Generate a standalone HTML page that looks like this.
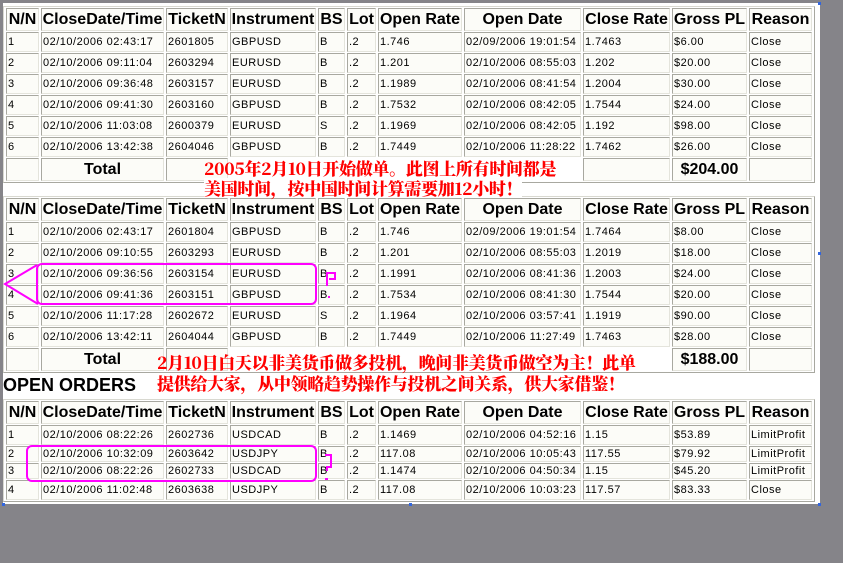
<!DOCTYPE html>
<html><head><meta charset="utf-8"><style>
html,body{margin:0;padding:0;}
body{width:843px;height:563px;background:#858489;position:relative;overflow:hidden;font-family:"Liberation Sans",Arial,sans-serif;}
#page{position:absolute;left:3px;top:3px;width:817px;height:501px;background:#fff;overflow:hidden;}
table{position:absolute;left:0;border-collapse:separate;border-spacing:2px 1px;table-layout:fixed;width:811px;border:1px solid;border-color:#d8d8d0 #a8a8a0 #a8a8a0 #d8d8d0;background:#fff;}
td{border:1px solid;border-color:#a8a8a0 #e4e4dc #e4e4dc #a8a8a0;background:#fcfcf8;font-size:11px;letter-spacing:0.5px;padding:0 0 0 1px;height:18px;white-space:nowrap;overflow:hidden;color:#000;}
tr.h td{font-size:16px;letter-spacing:0;font-weight:bold;height:21px;text-align:center;padding:0;}
tr.t td{height:21px;}
tr.t td.n{border:none;background:#fff;}
tr.t td.tot{font-size:16px;letter-spacing:0;font-weight:bold;text-align:center;padding:0;}
tr.s td{height:14px;line-height:12px;}
.red{position:absolute;color:#ff0000;font-family:"Noto Serif CJK SC","WenQuanYi Zen Hei",serif;font-weight:900;font-size:17px;line-height:20px;white-space:nowrap;letter-spacing:-0.3px;}
</style></head><body>
<div id="page">
<table style="top:3px">
<colgroup><col style="width:33px"><col style="width:123px"><col style="width:62px"><col style="width:86px"><col style="width:27px"><col style="width:29px"><col style="width:84px"><col style="width:117px"><col style="width:87px"><col style="width:75px"><col style="width:63px"></colgroup>
<tr class="h"><td>N/N</td><td>CloseDate/Time</td><td>TicketN</td><td>Instrument</td><td>BS</td><td>Lot</td><td>Open Rate</td><td>Open Date</td><td>Close Rate</td><td>Gross PL</td><td>Reason</td></tr>
<tr><td>1</td><td>02/10/2006 02:43:17</td><td>2601805</td><td>GBPUSD</td><td>B</td><td>.2</td><td>1.746</td><td>02/09/2006 19:01:54</td><td>1.7463</td><td>$6.00</td><td>Close</td></tr>
<tr><td>2</td><td>02/10/2006 09:11:04</td><td>2603294</td><td>EURUSD</td><td>B</td><td>.2</td><td>1.201</td><td>02/10/2006 08:55:03</td><td>1.202</td><td>$20.00</td><td>Close</td></tr>
<tr><td>3</td><td>02/10/2006 09:36:48</td><td>2603157</td><td>EURUSD</td><td>B</td><td>.2</td><td>1.1989</td><td>02/10/2006 08:41:54</td><td>1.2004</td><td>$30.00</td><td>Close</td></tr>
<tr><td>4</td><td>02/10/2006 09:41:30</td><td>2603160</td><td>GBPUSD</td><td>B</td><td>.2</td><td>1.7532</td><td>02/10/2006 08:42:05</td><td>1.7544</td><td>$24.00</td><td>Close</td></tr>
<tr><td>5</td><td>02/10/2006 11:03:08</td><td>2600379</td><td>EURUSD</td><td>S</td><td>.2</td><td>1.1969</td><td>02/10/2006 08:42:05</td><td>1.192</td><td>$98.00</td><td>Close</td></tr>
<tr><td>6</td><td>02/10/2006 13:42:38</td><td>2604046</td><td>GBPUSD</td><td>B</td><td>.2</td><td>1.7449</td><td>02/10/2006 11:28:22</td><td>1.7462</td><td>$26.00</td><td>Close</td></tr>
<tr class="t"><td></td><td class="tot">Total</td><td></td><td class="n" colspan="5"></td><td></td><td class="tot">$204.00</td><td></td></tr>
</table>

<table style="top:193px">
<colgroup><col style="width:33px"><col style="width:123px"><col style="width:62px"><col style="width:86px"><col style="width:27px"><col style="width:29px"><col style="width:84px"><col style="width:117px"><col style="width:87px"><col style="width:75px"><col style="width:63px"></colgroup>
<tr class="h"><td>N/N</td><td>CloseDate/Time</td><td>TicketN</td><td>Instrument</td><td>BS</td><td>Lot</td><td>Open Rate</td><td>Open Date</td><td>Close Rate</td><td>Gross PL</td><td>Reason</td></tr>
<tr><td>1</td><td>02/10/2006 02:43:17</td><td>2601804</td><td>GBPUSD</td><td>B</td><td>.2</td><td>1.746</td><td>02/09/2006 19:01:54</td><td>1.7464</td><td>$8.00</td><td>Close</td></tr>
<tr><td>2</td><td>02/10/2006 09:10:55</td><td>2603293</td><td>EURUSD</td><td>B</td><td>.2</td><td>1.201</td><td>02/10/2006 08:55:03</td><td>1.2019</td><td>$18.00</td><td>Close</td></tr>
<tr><td>3</td><td>02/10/2006 09:36:56</td><td>2603154</td><td>EURUSD</td><td>B</td><td>.2</td><td>1.1991</td><td>02/10/2006 08:41:36</td><td>1.2003</td><td>$24.00</td><td>Close</td></tr>
<tr><td>4</td><td>02/10/2006 09:41:36</td><td>2603151</td><td>GBPUSD</td><td>B</td><td>.2</td><td>1.7534</td><td>02/10/2006 08:41:30</td><td>1.7544</td><td>$20.00</td><td>Close</td></tr>
<tr><td>5</td><td>02/10/2006 11:17:28</td><td>2602672</td><td>EURUSD</td><td>S</td><td>.2</td><td>1.1964</td><td>02/10/2006 03:57:41</td><td>1.1919</td><td>$90.00</td><td>Close</td></tr>
<tr><td>6</td><td>02/10/2006 13:42:11</td><td>2604044</td><td>GBPUSD</td><td>B</td><td>.2</td><td>1.7449</td><td>02/10/2006 11:27:49</td><td>1.7463</td><td>$28.00</td><td>Close</td></tr>
<tr class="t"><td></td><td class="tot">Total</td><td></td><td class="n" colspan="5"></td><td class="n"></td><td class="tot">$188.00</td><td></td></tr>
</table>

<div style="position:absolute;left:0;top:372px;font-size:18px;font-weight:bold;line-height:20px;">OPEN ORDERS</div>

<table style="top:396px">
<colgroup><col style="width:33px"><col style="width:123px"><col style="width:62px"><col style="width:86px"><col style="width:27px"><col style="width:29px"><col style="width:84px"><col style="width:117px"><col style="width:87px"><col style="width:75px"><col style="width:63px"></colgroup>
<tr class="h"><td>N/N</td><td>CloseDate/Time</td><td>TicketN</td><td>Instrument</td><td>BS</td><td>Lot</td><td>Open Rate</td><td>Open Date</td><td>Close Rate</td><td>Gross PL</td><td>Reason</td></tr>
<tr><td>1</td><td>02/10/2006 08:22:26</td><td>2602736</td><td>USDCAD</td><td>B</td><td>.2</td><td>1.1469</td><td>02/10/2006 04:52:16</td><td>1.15</td><td>$53.89</td><td>LimitProfit</td></tr>
<tr class="s"><td>2</td><td>02/10/2006 10:32:09</td><td>2603642</td><td>USDJPY</td><td>B</td><td>.2</td><td>117.08</td><td>02/10/2006 10:05:43</td><td>117.55</td><td>$79.92</td><td>LimitProfit</td></tr>
<tr class="s"><td>3</td><td>02/10/2006 08:22:26</td><td>2602733</td><td>USDCAD</td><td>B</td><td>.2</td><td>1.1474</td><td>02/10/2006 04:50:34</td><td>1.15</td><td>$45.20</td><td>LimitProfit</td></tr>
<tr><td>4</td><td>02/10/2006 11:02:48</td><td>2603638</td><td>USDJPY</td><td>B</td><td>.2</td><td>117.08</td><td>02/10/2006 10:03:23</td><td>117.57</td><td>$83.33</td><td>Close</td></tr>
</table>
</div>

<div class="red" style="left:204px;top:158px;">2005年2月10日开始做单。此图上所有时间都是</div>
<div class="red" style="left:204px;top:178px;background:#fff;">美国时间，按中国时间计算需要加12小时！</div>
<div class="red" style="left:157px;top:352px;">2月10日白天以非美货币做多投机，晚间非美货币做空为主！此单</div>
<div class="red" style="left:157px;top:373px;">提供给大家，从中领略趋势操作与投机之间关系，供大家借鉴！</div>

<svg width="843" height="563" style="position:absolute;left:0;top:0;" fill="none" stroke="#ff00ff" stroke-width="2">
<rect x="37" y="264" width="279" height="40" rx="5"/>
<polyline points="37,265 5,284 38,304"/>
<path d="M327,286 V273 H335 V279 H329"/>
<rect x="328" y="296" width="2" height="2" fill="#ff00ff" stroke="none"/>
<rect x="27" y="446" width="289" height="35" rx="5"/>
<path d="M325,455 H331 V467 H327 V471"/>
<rect x="325" y="478" width="3" height="2" fill="#ff00ff" stroke="none"/>
</svg>
<svg width="843" height="563" style="position:absolute;left:0;top:0;" fill="#3366dd">
<rect x="2" y="503" width="3" height="3"/><rect x="409" y="503" width="3" height="3"/><rect x="818" y="503" width="3" height="3"/><rect x="818" y="252" width="3" height="3"/><rect x="818" y="2" width="3" height="3"/>
</svg>
</body></html>
